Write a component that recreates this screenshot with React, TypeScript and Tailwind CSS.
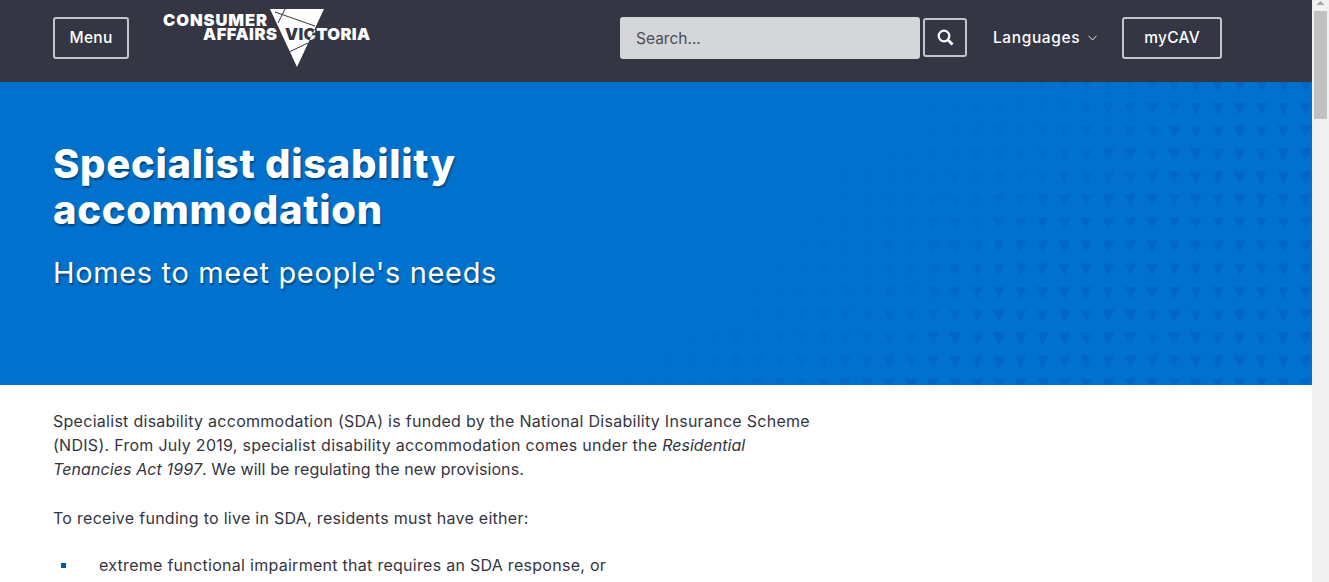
const triangles: { x: number; y: number; o: number }[] = [];
for (let row = 0; row < 14; row++) {
  for (let col = 0; col < 34; col++) {
    const x = 1305.4 - col * 21.9;
    const y = 79.5 + row * 23;
    // the pattern fades out towards the upper left
    const o = (x - 930 + (y - 80) * 1.1) / 320;
    if (o > 0.03) triangles.push({ x, y, o: Math.min(o, 1) });
  }
}

function HeaderButton({ label, width }: { label: string; width: string }) {
  return (
    <button className={`${width} h-[42px] rounded-[3px] border-2 border-[#c3c5d0] text-white text-[15.5px] font-medium tracking-[0.3px]`}>
      {label}
    </button>
  );
}

function Logo() {
  return (
    <svg width="212" height="62" viewBox="0 0 212 62" className="block" style={{ fontFamily: "Inter, sans-serif" }}>
      <defs>
        <clipPath id="logo-tri">
          <polygon points="107,4 161,4 134,62" />
        </clipPath>
      </defs>
      <polygon points="107,4 161,4 134,62" fill="#fff" />
      <path d="M122,4 L115,18 M112,7 L152,21 M126,47 L145,38" stroke="#343643" strokeWidth="1" />
      <text x="0" y="21" fontSize="16.5" fontWeight="900" fill="#fff" textLength="104">CONSUMER</text>
      <text x="40" y="35" fontSize="16.5" fontWeight="900" fill="#fff" textLength="74">AFFAIRS</text>
      <text x="122" y="35" fontSize="16.5" fontWeight="900" fill="#fff" textLength="85">VICTORIA</text>
      <text x="122" y="35" fontSize="16.5" fontWeight="900" fill="#343643" textLength="85" clipPath="url(#logo-tri)" aria-hidden="true">VICTORIA</text>
    </svg>
  );
}

export default function App() {
  return (
    <div className="flex h-[582px] w-[1329px] overflow-hidden bg-white font-['Inter',sans-serif]">
      <div className="w-[1312px] flex-shrink-0">
        {/* Header */}
        <header className="h-[82px] bg-[#343643] flex items-start pl-[53px]">
          <div className="mt-[17px]">
            <HeaderButton label="Menu" width="w-[76px]" />
          </div>
          <div className="ml-[34px] mt-[5px]">
            <Logo />
          </div>
          <input
            placeholder="Search..."
            className="ml-[245px] mt-[17px] w-[300px] h-[42px] rounded-[3px] bg-[#d5d6d8] px-4 text-[15.5px] placeholder:text-[#4b4d57] outline-none"
          />
          <button className="ml-[3px] mt-[18px] w-[44px] h-[39px] rounded-[3px] border-2 border-[#c3c5d0] flex items-center justify-center">
            <svg width="17" height="17" viewBox="0 0 17 17" fill="none" stroke="#fff">
              <circle cx="7" cy="7" r="5.3" strokeWidth="2.2" />
              <path d="M11 11 L15.5 15.5" strokeWidth="2.8" />
            </svg>
          </button>
          <div className="ml-[26px] mt-[17px] h-[42px] flex items-center gap-[8px] text-white text-[15.5px] font-medium tracking-[0.6px]">
            Languages
            <svg width="9" height="6" viewBox="0 0 9 6" fill="none" stroke="#e5e7eb" strokeWidth="1">
              <path d="M0.5 0.8 L4.5 5 L8.5 0.8" />
            </svg>
          </div>
          <div className="ml-[25px] mt-[17px]">
            <HeaderButton label="myCAV" width="w-[100px]" />
          </div>
        </header>

        {/* Hero */}
        <section className="relative h-[303px] bg-[#0072ce] pl-[53px] pt-[59px] overflow-hidden">
          <svg width="1312" height="303" viewBox="0 82 1312 303" className="absolute left-0 top-0">
            {triangles.map((t, i) => (
              <polygon
                key={i}
                points={`${t.x - 6},${t.y} ${t.x + 6},${t.y} ${t.x},${t.y + 13}`}
                fill="#0062c4"
                opacity={t.o * 0.7}
              />
            ))}
          </svg>
          <div className="relative [text-shadow:1px_2px_2px_rgba(0,0,0,0.4)] text-white">
            <h1 className="text-[40px] leading-[46px] font-extrabold w-[500px] tracking-[0.7px]">
              Specialist disability accommodation
            </h1>
            <p className="mt-[23px] text-[29px] leading-[34px] font-normal tracking-[0.65px]">Homes to meet people's needs</p>
          </div>
        </section>

        {/* Body copy */}
        <main className="pl-[53px] pt-[24px] text-[16px] leading-[24px] tracking-[0.28px] text-[#35353f] w-[850px]">
          <p>
            Specialist disability accommodation (SDA) is funded by the National Disability Insurance Scheme
            <br />
            (NDIS). From July 2019, specialist disability accommodation comes under the{" "}
            <em className="tracking-[0px]">Residential</em>
            <br />
            <em className="tracking-[0.1px]">Tenancies Act 1997</em>
            <span className="tracking-[0.1px]">. We will be regulating the new provisions.</span>
          </p>
          <p className="mt-[25px]">To receive funding to live in SDA, residents must have either:</p>
          <ul className="mt-[23px]">
            <li className="flex items-center">
              <span className="ml-[8px] mr-[33px] w-[5px] h-[5px] bg-[#0058a8] flex-shrink-0" />
              extreme functional impairment that requires an SDA response, or
            </li>
          </ul>
        </main>
      </div>

      {/* Scrollbar */}
      <div className="w-[17px] flex-shrink-0 bg-[#f1f1f1] flex flex-col items-center">
        <svg width="17" height="11" viewBox="0 0 17 11" className="flex-shrink-0">
          <polygon points="8.5,1 12.5,5 4.5,5" fill="#a3a3a3" />
        </svg>
        <div className="w-[13px] h-[108px] bg-[#c1c1c1]" />
      </div>
    </div>
  );
}
